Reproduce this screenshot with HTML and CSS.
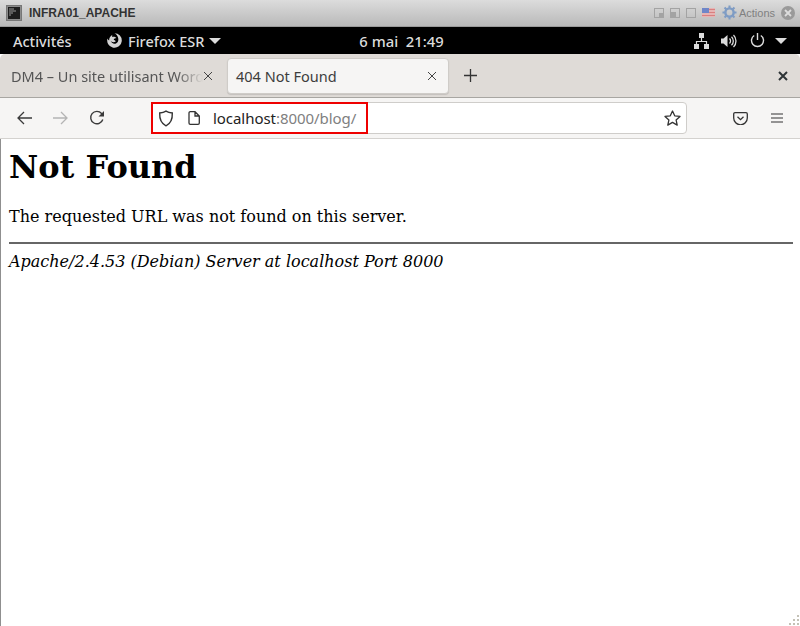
FILE: index.html
```html
<!DOCTYPE html>
<html lang="fr">
<head>
<meta charset="utf-8">
<title>404 Not Found</title>
<link rel="stylesheet" href="styles.css">
</head>
<body>
<div class="vm-bar">
  <svg class="vm-icon" width="16" height="16" viewBox="0 0 16 16"><rect x="0.5" y="0.5" width="15" height="15" fill="#8c8c8c" stroke="#777"/><rect x="2" y="2" width="12" height="12" fill="#1e1e1e"/><path d="M3 4h5M3 6h7M3 8h4M3 10h2" stroke="#999" stroke-width="1"/></svg>
  <span class="vm-title">INFRA01_APACHE</span>
  <div class="vm-tools">
    <svg width="10" height="10" viewBox="0 0 10 10"><rect x="0.5" y="0.5" width="9" height="9" fill="none" stroke="#a3a3a3"/><rect x="5" y="5" width="4" height="4" fill="#a3a3a3"/></svg>
    <svg class="vm-t2" width="10" height="10" viewBox="0 0 10 10"><rect x="0.5" y="0.5" width="9" height="9" fill="none" stroke="#a3a3a3"/><rect x="1" y="4" width="5" height="5" fill="#a3a3a3"/></svg>
    <svg class="vm-t2" width="10" height="10" viewBox="0 0 10 10"><rect x="0.5" y="0.5" width="9" height="9" fill="none" stroke="#a3a3a3"/></svg>
    <svg class="vm-t2" width="13" height="9" viewBox="0 0 13 9"><rect width="13" height="9" fill="#e6b4b4"/><path d="M0 1.500h13M0 4.500h13M0 7.500h13" stroke="#d98080" stroke-width="1"/><rect width="7" height="5" fill="#6f86c8"/></svg>
    <svg class="vm-gear" width="15" height="15" viewBox="0 0 16 16"><circle cx="8" cy="8" r="4.400" fill="none" stroke="#7f9cc4" stroke-width="2.600"/><path d="M8 0.500v3M8 12.500v3M0.500 8h3M12.500 8h3M2.700 2.700l2.100 2.100M11.200 11.200l2.100 2.100M2.700 13.300l2.100-2.100M11.200 4.800l2.100-2.100" stroke="#7f9cc4" stroke-width="2.200"/></svg>
    <span class="vm-actions">Actions</span>
    <svg class="vm-close" width="14" height="14" viewBox="0 0 14 14"><circle cx="7" cy="7" r="7" fill="#9a9a9a"/><path d="M4 4l6 6M10 4l-6 6" stroke="#ddd" stroke-width="1.800"/></svg>
  </div>
</div>

<div class="gnome-bar">
  <span class="g-activities">Activités</span>
  <div class="g-app">
    <svg width="17" height="17" viewBox="0 0 17 17"><path d="M8.500 1.200a7.300 7.300 0 1 1-7 5.200c.3 1 .9 1.600 1.600 2 0-2.600 1.400-4.700 3.500-5.700-.6.900-.7 1.500-.5 2.100 1.700-.4 3.400.1 4.300 1.200-1.200.2-2.500.9-2.700 1.500 0 .6 2.200 1 2 2.100-1.800 1.300-4.400.6-5.200-1 .7 2.600 3.400 3.800 5.500 2.900 2-.9 2.900-3.600 2-5.900C11.600 3.600 10.300 2.100 8.500 1.200z" fill="#d3d3d3"/></svg>
    <span class="g-app-name">Firefox ESR</span>
    <span class="g-tri"></span>
  </div>
  <span class="g-clock">6 mai&nbsp; 21:49</span>
  <div class="g-status">
    <svg width="15" height="16" viewBox="0 0 15 16"><path d="M5 0h5v5H5zM0 11h5v5H0zM10 11h5v5h-5z" fill="#dcdcdc"/><path d="M7.500 5v3M2.500 11V8.500h10V11" fill="none" stroke="#dcdcdc" stroke-width="1.200"/></svg>
    <svg class="g-vol" width="16" height="14" viewBox="0 0 16 14"><path d="M0 4.500h2.500L6.500 1v12L2.500 9.500H0z" fill="#dcdcdc"/><path d="M8.500 4.500a3.500 3.500 0 0 1 0 5M10.500 2.700a6 6 0 0 1 0 8.600M12.500 1a8.500 8.500 0 0 1 0 12" fill="none" stroke="#dcdcdc" stroke-width="1.300"/></svg>
    <svg class="g-power" width="15" height="15" viewBox="0 0 15 15"><path d="M4.200 2.500a6 6 0 1 0 6.600 0" fill="none" stroke="#dcdcdc" stroke-width="1.400"/><path d="M7.500 0v7" stroke="#dcdcdc" stroke-width="1.400"/></svg>
    <span class="g-tri g-tri-small"></span>
  </div>
</div>

<div class="browser">
  <div class="tabs">
    <div class="tab tab-inactive">
      <span class="tab-label fade">DM4 – Un site utilisant Word</span>
      <svg class="x" width="10" height="10" viewBox="0 0 10 10"><path d="M1 1l8 8M9 1l-8 8" stroke="#444" stroke-width="1"/></svg>
    </div>
    <div class="tab tab-active">
      <span class="tab-label">404 Not Found</span>
      <svg class="x x-active" width="10" height="10" viewBox="0 0 10 10"><path d="M1 1l8 8M9 1l-8 8" stroke="#444" stroke-width="1"/></svg>
    </div>
    <svg class="plus" width="13" height="13" viewBox="0 0 13 13"><path d="M6.500 0v13M0 6.500h13" stroke="#333" stroke-width="1.300"/></svg>
    <svg class="win-close" width="10" height="10" viewBox="0 0 10 10"><path d="M1 1l8 8M9 1l-8 8" stroke="#2e3436" stroke-width="2"/></svg>
  </div>

  <div class="toolbar">
    <svg class="tb-back" width="15" height="14" viewBox="0 0 15 14"><path d="M15 7H1.500M7 1L1 7l6 6" fill="none" stroke="#3a3a3a" stroke-width="1.300"/></svg>
    <svg class="tb-fwd" width="15" height="14" viewBox="0 0 15 14"><path d="M0 7h13.500M8 1l6 6-6 6" fill="none" stroke="#b4b4b4" stroke-width="1.300"/></svg>
    <svg class="tb-reload" width="16" height="16" viewBox="0 0 16 16"><path d="M13.800 9.500A6.200 6.200 0 1 1 12.600 3.500L14.500 5.800" fill="none" stroke="#3a3a3a" stroke-width="1.400"/><path d="M15 1v5.500H9.500z" fill="#3a3a3a"/></svg>
    <div class="urlbar">
      <svg class="shield" width="16" height="17" viewBox="0 0 16 17"><path d="M8 1.200c1.800 1.200 3.800 1.700 6.300 1.800.3 6.500-2 10.700-6.300 12.800C3.700 13.700 1.400 9.500 1.700 3 4.200 2.900 6.200 2.400 8 1.200z" fill="none" stroke="#333" stroke-width="1.400"/></svg>
      <svg class="page" width="12" height="14" viewBox="0 0 12 14"><path d="M1 2a1.300 1.300 0 0 1 1.300-1.300H7L11.300 5v7a1.300 1.300 0 0 1-1.300 1.300H2.300A1.300 1.300 0 0 1 1 12zM7 .7V5h4.300" fill="none" stroke="#333" stroke-width="1.300"/></svg>
      <span class="url"><span class="url-host">localhost</span>:8000/blog/</span>
      <svg class="star" width="17" height="16" viewBox="0 0 17 16"><path d="M8.500 1l2.200 4.800 5.300.6-3.900 3.500 1.100 5.200-4.700-2.700-4.700 2.700 1.100-5.200L1 6.400l5.300-.6z" fill="none" stroke="#333" stroke-width="1.300" stroke-linejoin="round"/></svg>
      <div class="highlight"></div>
    </div>
    <svg class="pocket" width="15" height="13" viewBox="0 0 15 13"><path d="M2 .7h11a1.300 1.300 0 0 1 1.300 1.300v4a6.800 6.800 0 0 1-13.600 0V2A1.300 1.300 0 0 1 2 .7z" fill="none" stroke="#333" stroke-width="1.300"/><path d="M4.500 4.800l3 2.900 3-2.900" fill="none" stroke="#333" stroke-width="1.300"/></svg>
    <svg class="menu" width="12" height="10" viewBox="0 0 12 10"><path d="M0 1h12M0 5h12M0 9h12" stroke="#333" stroke-width="1.200"/></svg>
  </div>

  <main class="page-content">
    <h1>Not Found</h1>
    <p>The requested URL was not found on this server.</p>
    <hr>
    <address>Apache/2.4.53 (Debian) Server at localhost Port 8000</address>
    <svg class="grip" width="11" height="11" viewBox="0 0 11 11"><path d="M8 0h2v2H8zM4 4h2v2H4zM8 4h2v2H8zM0 8h2v2H0zM4 8h2v2H4zM8 8h2v2H8z" fill="#c4c1b6"/></svg>
  </main>
</div>
</body>
</html>
```
FILE: styles.css
```css
* { box-sizing: border-box; }
html, body { margin: 0; height: 100%; overflow: hidden; }
body { width: 800px; height: 626px; display: flex; flex-direction: column; background: #fff; }
svg { display: block; flex: none; }

.vm-bar {
  height: 27px; flex: none; display: flex; align-items: center; padding: 0 5px 1px 6px;
  background: linear-gradient(#dcdcdc, #b9b9b9);
  border-bottom: 1px solid #9a9a9a;
}
.vm-title { margin-left: 7px; font: bold 12px "Liberation Sans", sans-serif; color: #333; }
.vm-tools { margin-left: auto; display: flex; align-items: center; }
.vm-t2 { margin-left: 6px; }
.vm-gear { margin-left: 7px; }
.vm-actions { margin-left: 2px; font: 11px "Liberation Sans", sans-serif; color: #808080; }
.vm-close { margin-left: 6px; }

.gnome-bar {
  height: 27px; flex: none; display: flex; align-items: center;
  background: #000; color: #dcdcdc; font: 500 14.5px "Noto Sans", sans-serif; padding: 0 13px;
}
.g-activities { width: 93px; }
.g-app { display: flex; align-items: center; }
.g-app-name { margin-left: 5px; }
.g-tri { margin-left: 5px; width: 0; height: 0; border-left: 6px solid transparent; border-right: 6px solid transparent; border-top: 6px solid #dcdcdc; }
.g-clock { margin-left: 138px; font-size: 14.8px; }
.g-status { margin-left: auto; display: flex; align-items: center; }
.g-vol { margin-left: 12px; }
.g-power { margin-left: 13px; }
.g-tri-small { margin-left: 10px; }

.browser { flex: 1; display: flex; flex-direction: column; min-height: 0; }
.tabs {
  height: 44px; flex: none; display: flex; align-items: center; padding: 4px 12px 4px 0;
  background: #dfdbd7; border-bottom: 1px solid #a8a6a2; border-top-left-radius: 5px; border-top-right-radius: 5px;
  font: 14.5px "Noto Sans", sans-serif;
}
.tab { height: 36px; display: flex; align-items: center; border-radius: 4px; }
.tab-inactive { width: 225px; padding: 0 12px 0 11px; color: #555; }
.tab-active { width: 222px; padding: 0 11px 0 8px; margin-left: 2px; background: #f6f5f4; color: #3d3d3d; border: 1px solid #cfccc8; box-shadow: 0 1px 1px rgba(0,0,0,.12); }
.tab-label { flex: 1; white-space: nowrap; min-width: 0; }
.fade { -webkit-mask-image: linear-gradient(to right, #000 86%, transparent 100%); mask-image: linear-gradient(to right, #000 86%, transparent 100%); }
.x-active { margin-left: 5px; }
.plus { margin-left: 15px; }
.win-close { margin-left: auto; }

.toolbar {
  height: 41px; flex: none; display: flex; align-items: center; padding: 0 17px 0 17px;
  background: #f6f5f4; border-bottom: 1px solid #d4d2cf;
}
.tb-fwd { margin-left: 21px; }
.tb-reload { margin-left: 21px; }
.urlbar {
  width: 537px; height: 32px; margin-left: 46px; display: flex; align-items: center; position: relative;
  background: #fff; border: 1px solid #cfcdca; border-radius: 4px; padding: 0 5px 0 6px;
  font: 15px "Noto Sans", sans-serif; color: #808080;
}
.page { margin-left: 14px; }
.url { margin-left: 13px; white-space: nowrap; letter-spacing: -0.05px; }
.url-host { color: #222; }
.star { margin-left: auto; }
.highlight { position: absolute; left: -1px; top: -1px; width: 217px; height: 32px; border: 2px solid #ee0000; }
.pocket { margin-left: 46px; }
.menu { margin-left: 23px; }

.page-content {
  flex: 1; position: relative; padding: 9px 7px 0 8px; border-left: 1px solid #8f8f8f;
  font: 16px "DejaVu Serif", serif; color: #000; background: #fff;
}
h1 { margin: 0; font-size: 32px; font-weight: bold; line-height: 38px; }
.page-content p { margin: 21px 0 0; line-height: 19px; }
hr { margin: 16px 0 0; height: 2px; border: none; background: #666; }
address { margin-top: 8px; line-height: 19px; font-style: italic; }
.grip { position: absolute; right: 0; bottom: 0; }
```
